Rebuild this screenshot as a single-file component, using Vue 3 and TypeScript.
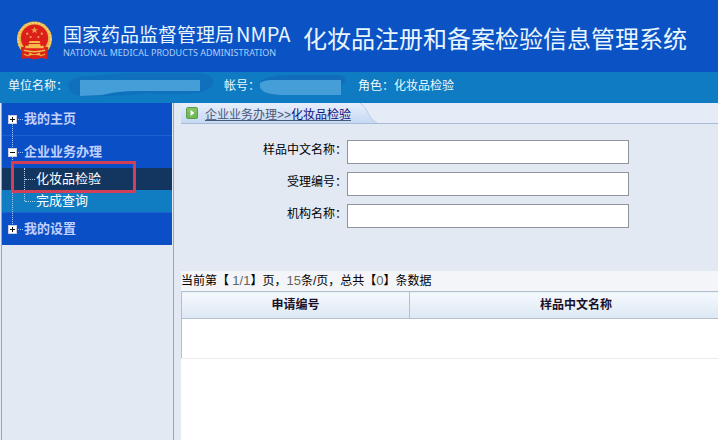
<script setup lang="ts">
import { reactive } from 'vue'

interface MenuChild {
  label: string
  active: boolean
}

interface MenuGroup {
  label: string
  open: boolean
  children: MenuChild[]
}

interface Field {
  id: string
  label: string
  value: string
}

const menu: MenuGroup[] = [
  { label: '我的主页', open: false, children: [] },
  {
    label: '企业业务办理',
    open: true,
    children: [
      { label: '化妆品检验', active: true },
      { label: '完成查询', active: false },
    ],
  },
  { label: '我的设置', open: false, children: [] },
]

const fields = reactive<Field[]>([
  { id: 'sample-name', label: '样品中文名称：', value: '' },
  { id: 'accept-no', label: '受理编号：', value: '' },
  { id: 'org-name', label: '机构名称：', value: '' },
])
</script>

<template>
  <div class="page">
    <header class="banner">
      <svg class="emblem" viewBox="0 0 38 40" aria-hidden="true">
        <circle cx="19" cy="18.5" r="18" fill="#e9b44c" />
        <circle cx="19" cy="18.5" r="16.6" fill="none" stroke="#f8d978" stroke-width="1.6" stroke-dasharray="2 1.4" />
        <path d="M5 27c4-2 9 1 14 1s10-3 14-1l-1 12-6-1-7 1.500-7-1.500-6 1z" fill="#d8201c" />
        <circle cx="19" cy="17.500" r="14" fill="#dc1f1b" />
        <path d="M19 6l1 2.400h2.600l-2.100 1.600.8 2.500-2.300-1.500-2.300 1.500.8-2.500-2.100-1.600H18z" fill="#f0a04a" />
        <g fill="#f0a04a">
          <circle cx="11.500" cy="13" r="1.200" />
          <circle cx="26.500" cy="13" r="1.200" />
          <circle cx="15" cy="16.500" r="1.100" />
          <circle cx="23" cy="16.500" r="1.100" />
        </g>
        <path d="M14 20.500h10l1 2H13zM13 23.500h12v2h3.500V28h-19v-2.500H13z" fill="#f7b84c" />
        <path d="M8 30q11 3 22 0" fill="none" stroke="#f4bd45" stroke-width="1.600" />
        <path d="M14 32q5 4 10 0l2 4q-7-2-14 0z" fill="#efb23e" />
        <path d="M8 34l5 2M30 34l-5 2" stroke="#f0a23a" stroke-width="1.200" />
      </svg>
      <div class="agency">
        <div class="agency-cn">国家药品监督管理局<span class="agency-abbr">NMPA</span></div>
        <div class="agency-en">NATIONAL MEDICAL PRODUCTS ADMINISTRATION</div>
      </div>
      <h1 class="system">化妆品注册和备案检验信息管理系统</h1>
    </header>

    <div class="account">
      <span>单位名称：</span>
      <svg class="mask mask-unit" viewBox="0 0 156 31" aria-hidden="true">
        <path d="M0 13Q2 5 20 4L60 1h70q13 1 16 8-2 8-12 11-25 4-52 1-40 4-70 3Q0 21 0 13z" fill="#0f71be" />
        <path d="M12 8h120v11H66q-15 0-32 4l-22 1z" fill="#469ed8" />
      </svg>
      <span>帐号：</span>
      <svg class="mask mask-user" viewBox="0 0 98 31" aria-hidden="true">
        <path d="M0 11Q4 3 30 3h50q6 1 5 7-20 14-62 13Q-1 22 0 11z" fill="#0f6dbc" />
        <path d="M0 11q4-3 12-3h69v15H26Q2 23 0 15z" fill="#469ed8" />
      </svg>
      <span>角色：化妆品检验</span>
    </div>

    <div class="body">
      <nav class="side">
        <ul class="tree">
          <li v-for="group in menu" :key="group.label" class="group">
            <a class="group-link" href="#">
              <svg class="toggle" viewBox="0 0 9 9" aria-hidden="true">
                <rect x="0.500" y="0.500" width="8" height="8" fill="#fff" stroke="#c9cfdd" />
                <path d="M2 4.500h5" stroke="#111" />
                <path v-if="!group.open" d="M4.500 2v5" stroke="#111" />
              </svg>
              <span class="dash"></span>
              <span>{{ group.label }}</span>
            </a>
            <ul v-if="group.open" class="children">
              <li v-for="child in group.children" :key="child.label" class="child" :class="{ active: child.active }">
                <a class="child-link" href="#">
                  <span class="branch"></span>
                  <span>{{ child.label }}</span>
                </a>
              </li>
            </ul>
          </li>
        </ul>
      </nav>

      <main class="content">
        <div class="crumbs">
          <div class="tab">
            <svg class="go" viewBox="0 0 12 12" aria-hidden="true">
              <rect x="0.500" y="0.500" width="11" height="11" rx="1.500" fill="#72b854" stroke="#5b9c46" />
              <path d="M1 1h10v4H1z" fill="#8fca70" opacity="0.600" />
              <path d="M4.500 3v6l4-3z" fill="#fff" />
            </svg>
            <a class="trail" href="#">企业业务办理&gt;&gt;<span class="here">化妆品检验</span></a>
          </div>
          <svg class="tab-end" viewBox="0 0 26 20" preserveAspectRatio="none" aria-hidden="true">
            <defs>
              <linearGradient id="tab-fill" x1="0" y1="0" x2="0" y2="1">
                <stop offset="0" stop-color="#e8effb" />
                <stop offset="1" stop-color="#c6d8f2" />
              </linearGradient>
            </defs>
            <path d="M0 0h9Q14 3 17 10t9 10H0z" fill="url(#tab-fill)" />
            <path d="M9 0Q14 3 17 10t9 10" fill="none" stroke="#bccde8" />
          </svg>
        </div>

        <form class="filters" @submit.prevent>
          <div v-for="field in fields" :key="field.id" class="row">
            <label :for="field.id">{{ field.label }}</label>
            <input :id="field.id" v-model="field.value" type="text" />
          </div>
        </form>

        <section class="results">
          <div class="pager">当前第【 <span class="num">1/1</span>】页，<span class="num">15</span>条/页，总共【<span class="num">0</span>】条数据</div>
          <table class="grid">
            <thead>
              <tr>
                <th class="col-no">申请编号</th>
                <th>样品中文名称</th>
              </tr>
            </thead>
            <tbody>
              <tr>
                <td></td>
                <td></td>
              </tr>
            </tbody>
          </table>
        </section>
      </main>
    </div>
  </div>
</template>

<style>
body {
  background: #e3e9f3;
}
</style>

<style scoped>
.page {
  display: flex;
  flex-direction: column;
  min-height: 100vh;
  overflow: hidden;
  font: 12px/18px "Liberation Sans", "Noto Sans CJK SC", sans-serif;
  color: #000;
}

a {
  color: inherit;
  text-decoration: none;
}

ul {
  list-style: none;
  margin: 0;
  padding: 0;
}

.banner {
  display: flex;
  align-items: center;
  height: 72px;
  padding: 8px 16px 0;
  box-sizing: border-box;
  background: #0b52c4;
  color: #e8f6ff;
  font-family: "Noto Sans CJK SC", sans-serif;
  white-space: nowrap;
}

.emblem {
  flex: none;
  width: 37px;
  height: 39px;
}

.agency {
  flex: none;
  width: 240px;
  margin-left: 10px;
}

.agency-cn {
  font-size: 19px;
  line-height: 26px;
}

.agency-abbr {
  margin-left: 2px;
  font-size: 20px;
}

.agency-en {
  font: 9px/12px "Noto Sans", sans-serif;
  color: #a9d0fb;
}

.system {
  margin: 0;
  padding-bottom: 4px;
  font-size: 24px;
  line-height: 32px;
  font-weight: 400;
}

.account {
  display: flex;
  align-items: center;
  height: 31px;
  padding: 0 8px;
  background: #0f7bc2;
  color: #eafaff;
  white-space: nowrap;
}

.account span {
  padding-bottom: 4px;
}

.mask {
  flex: none;
  height: 31px;
}

.mask-unit {
  width: 156px;
}

.mask-user {
  width: 98px;
}

.body {
  display: flex;
  flex: 1;
  padding-left: 1px;
}

.side {
  flex: none;
  width: 171px;
  border-left: 1px solid #8fa9c8;
  border-right: 1px solid #8fa9c8;
  background: #e3e9f3;
}

.tree {
  margin-right: 1px;
  background: #0b4fc6;
}

.group {
  position: relative;
  border-bottom: 1px solid #1a60cf;
}

.group:last-child {
  border-bottom: 0;
}

.group:not(:last-child)::before {
  content: "";
  position: absolute;
  top: 16px;
  bottom: -16px;
  left: 10px;
  z-index: 1;
  border-left: 1px dotted #a9c4f2;
}

.group-link {
  display: flex;
  align-items: center;
  height: 32px;
  padding-left: 6px;
  color: #c0d0ff;
  font-size: 13px;
  font-weight: 700;
}

.toggle {
  position: relative;
  z-index: 2;
  width: 9px;
  height: 9px;
}

.dash {
  width: 5px;
  margin: 0 1px;
  border-top: 1px dotted #a9c4f2;
}

.child {
  position: relative;
  background: #107dc2;
  color: #fff;
  font-size: 13px;
}

.child.active {
  background: #12365f;
}

.child.active::after {
  content: "";
  position: absolute;
  inset: -7px 36px -3px 9px;
  z-index: 3;
  border: 3px solid #d23f58;
  pointer-events: none;
}

.child-link {
  display: flex;
  align-items: center;
  height: 22px;
  padding-left: 22px;
}

.branch {
  align-self: stretch;
  width: 11px;
  position: relative;
  border-left: 1px dotted #b8cbe4;
}

.branch::after {
  content: "";
  position: absolute;
  top: 11px;
  left: 0;
  right: 1px;
  border-top: 1px dotted #b8cbe4;
}

.child:last-child .branch {
  height: 11px;
  align-self: flex-start;
}

.content {
  display: flex;
  flex: 1;
  flex-direction: column;
  min-width: 0;
  padding-left: 7px;
  background: #e2e9f3;
}

.crumbs {
  display: flex;
  height: 20px;
  border-bottom: 1px solid #a9bcd6;
  background: #e5ebf7;
}

.tab {
  display: flex;
  align-items: center;
  gap: 7px;
  padding-left: 5px;
  background: linear-gradient(#e8effb, #c6d8f2);
}

.tab-end {
  width: 26px;
  height: 20px;
}

.go {
  width: 12px;
  height: 12px;
}

.trail {
  color: #4a5878;
  text-decoration: underline;
  line-height: 20px;
  padding-top: 4px;
}

.here {
  color: #10107c;
}

.filters {
  display: flex;
  flex-direction: column;
  gap: 8px;
  padding: 16px 89px 43px 0;
}

.row {
  display: flex;
  align-items: center;
}

.row label {
  flex: none;
  width: 166px;
  padding-bottom: 4px;
  text-align: right;
}

.row input {
  flex: 1;
  min-width: 0;
  height: 24px;
  box-sizing: border-box;
  border: 1px solid #8d929e;
  background: #fff;
  font: inherit;
}

.results {
  flex: 1;
  overflow: hidden;
  background: #fff;
}

.pager {
  height: 20px;
  line-height: 20px;
  background: #f4f5f9;
  white-space: nowrap;
}

.num {
  color: #66665c;
  font-size: 13px;
}

.grid {
  width: calc(100% + 25px);
  border-collapse: collapse;
  table-layout: fixed;
}

.grid th {
  height: 26px;
  padding: 0;
  border: 1px solid #b3bfcc;
  background: linear-gradient(#f5f9fd, #dce8f4);
  color: #1c1028;
  font-weight: 700;
}

.grid .col-no {
  width: 227px;
}

.grid td {
  height: 39px;
  padding: 0;
  border-bottom: 1px solid #ebebed;
}

.grid td:first-child {
  border-left: 1px solid #b3bfcc;
}
</style>
